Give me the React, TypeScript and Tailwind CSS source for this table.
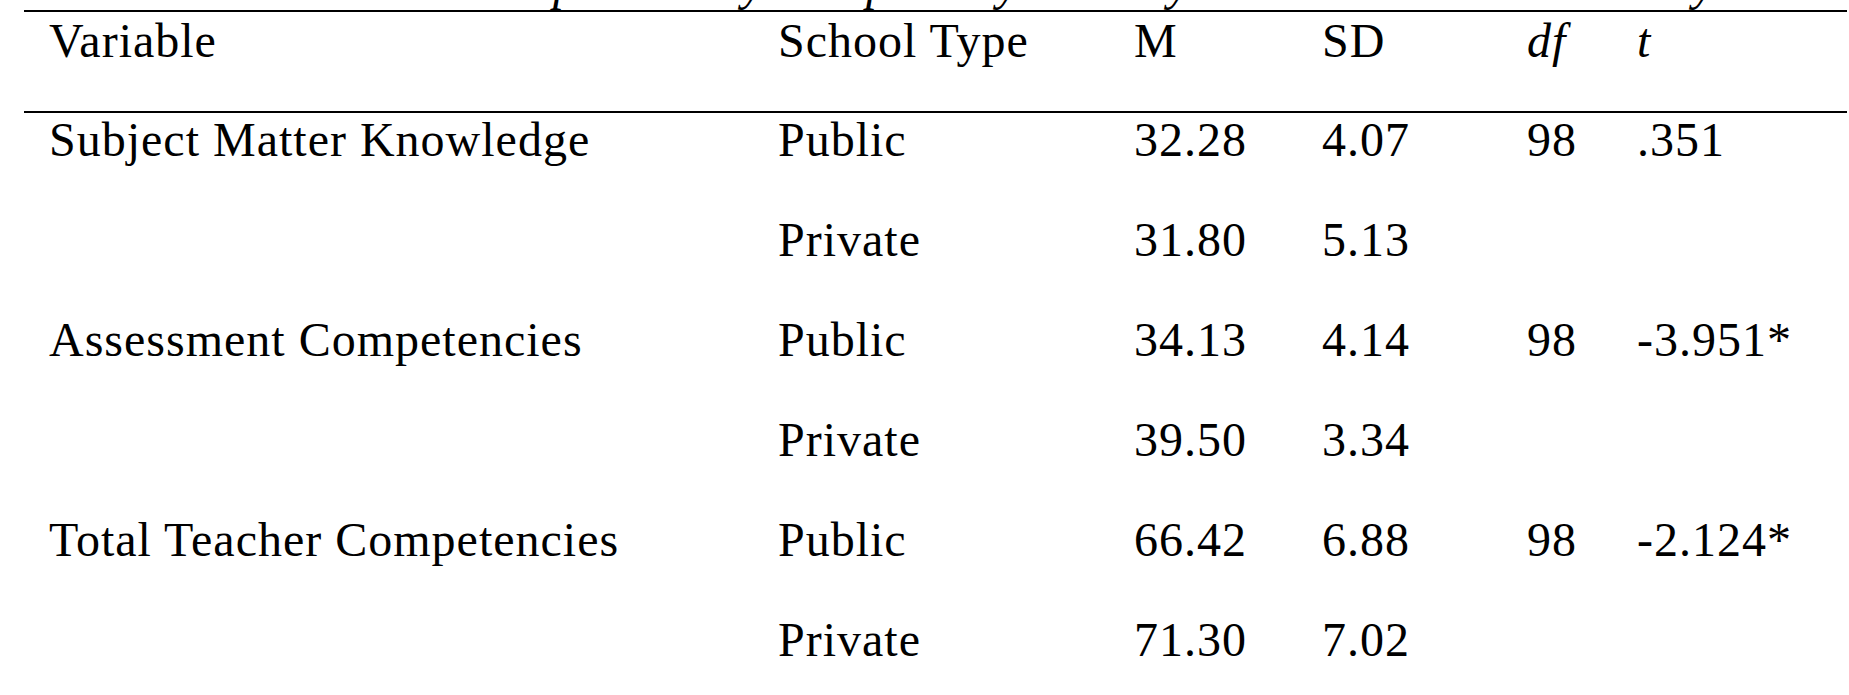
import React from "react";

type Row = { v: string; s: string; m: string; sd: string; df: string; t: string };

const rows: Row[] = [
  { v: "Subject Matter Knowledge", s: "Public", m: "32.28", sd: "4.07", df: "98", t: ".351" },
  { v: "", s: "Private", m: "31.80", sd: "5.13", df: "", t: "" },
  { v: "Assessment Competencies", s: "Public", m: "34.13", sd: "4.14", df: "98", t: "-3.951*" },
  { v: "", s: "Private", m: "39.50", sd: "3.34", df: "", t: "" },
  { v: "Total Teacher Competencies", s: "Public", m: "66.42", sd: "6.88", df: "98", t: "-2.124*" },
  { v: "", s: "Private", m: "71.30", sd: "7.02", df: "", t: "" },
];

const cols = "grid grid-cols-[754px_356px_188px_205px_110px_1fr]";

export default function App() {
  return (
    <div className="w-[1849px] h-[695px] overflow-hidden bg-white text-black text-[48px] leading-[48px] tracking-[1px] font-['Liberation_Serif','Times_New_Roman',serif]">
      {/* clipped caption (only descenders visible) */}
      <div className="h-[10px] overflow-hidden">
        <div className="flex mt-[-40px] italic whitespace-pre">
          <span className="inline-block w-[30px] ml-[553px]">p</span>
          <span className="inline-block w-[30px] ml-[159px]">y</span>
          <span className="inline-block w-[30px] ml-[94px]">p</span>
          <span className="inline-block w-[30px] ml-[101px]">y</span>
          <span className="inline-block w-[30px] ml-[141px]">y</span>
          <span className="inline-block w-[30px] ml-[495px]">y</span>
        </div>
      </div>
      <div className="ml-[24px] mr-[2px]">
        <div className={`${cols} border-t-2 border-b-2 border-black pt-[5px] h-[103px]`}>
          <div className="pl-[25px]">Variable</div>
          <div>School Type</div>
          <div>M</div>
          <div>SD</div>
          <div className="italic">df</div>
          <div className="italic">t</div>
        </div>
        {rows.map((r, i) => (
          <div key={i} className={`${cols} h-[100px] pt-[3px]`}>
            <div className="pl-[25px] whitespace-nowrap">{r.v}</div>
            <div>{r.s}</div>
            <div>{r.m}</div>
            <div>{r.sd}</div>
            <div>{r.df}</div>
            <div>{r.t}</div>
          </div>
        ))}
      </div>
    </div>
  );
}
